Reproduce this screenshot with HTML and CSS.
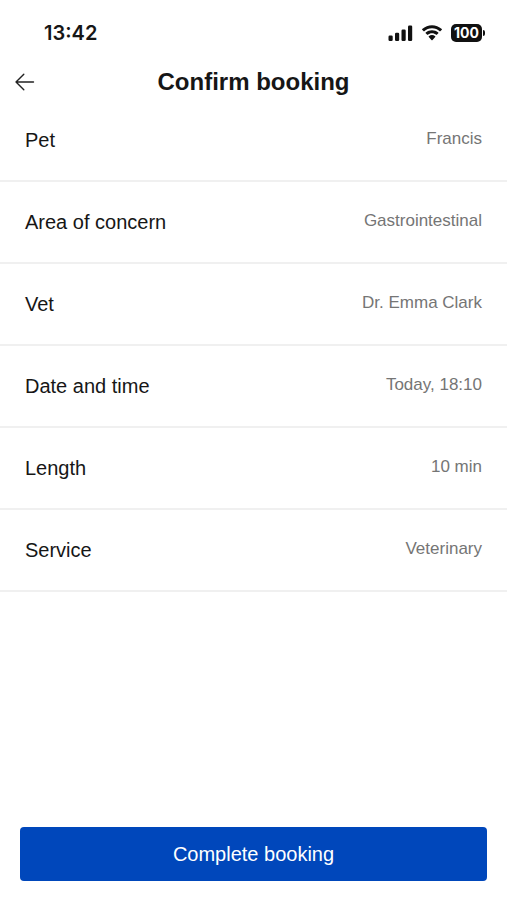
FILE: index.html
```html
<!DOCTYPE html>
<html lang="en">
<head>
<meta charset="utf-8">
<meta name="viewport" content="width=device-width, initial-scale=1">
<title>Confirm booking</title>
<link rel="stylesheet" href="styles.css">
</head>
<body>
<div class="status">
  <span class="clock">13:42</span>
  <div class="indicators">
    <svg width="25" height="16" viewBox="0 0 25 16" aria-hidden="true"><rect x="0.500" y="10.500" width="4.200" height="5.500" rx="1.200"/><rect x="7" y="7.800" width="4.200" height="8.200" rx="1.200"/><rect x="13.500" y="4.500" width="4.200" height="11.500" rx="1.200"/><rect x="20" y="0.500" width="4.200" height="15.500" rx="1.200"/></svg>
    <svg width="22" height="16" viewBox="0 0 22 16" aria-hidden="true"><path d="M11 3.200c3 0 5.700 1.200 7.700 3.100.2.200.4.200.6 0l1.500-1.500c.2-.2.200-.5 0-.7C15.300-1 6.700-1 1.200 4.100c-.2.200-.2.500 0 .7l1.500 1.500c.2.200.4.200.6 0C5.300 4.400 8 3.200 11 3.200zM11 8.200c1.600 0 3.100.6 4.200 1.600.2.200.4.200.6 0l1.500-1.500c.2-.2.200-.5 0-.7-3.500-3.200-9.100-3.200-12.600 0-.2.200-.2.500 0 .7l1.500 1.500c.2.200.4.200.6 0C7.900 8.800 9.400 8.200 11 8.200zM14.200 12c.2-.2.200-.5 0-.7-1.900-1.600-4.500-1.600-6.400 0-.2.200-.2.500 0 .7l2.900 3.200c.2.200.4.200.6 0z"/></svg>
    <div class="battery"><span class="level">100</span><span class="cap"></span></div>
  </div>
</div>
<header class="bar">
  <button class="back" type="button" aria-label="Back"><svg width="20" height="18" viewBox="0 0 20 18" aria-hidden="true"><path d="M18.500 9H1M8.800 1.200L1 9L8.800 16.800"/></svg></button>
  <h1>Confirm booking</h1>
</header>
<main>
  <dl class="details">
    <div class="row"><dt>Pet</dt><dd>Francis</dd></div>
    <div class="row"><dt>Area of concern</dt><dd>Gastrointestinal</dd></div>
    <div class="row"><dt>Vet</dt><dd>Dr. Emma Clark</dd></div>
    <div class="row"><dt>Date and time</dt><dd>Today, 18:10</dd></div>
    <div class="row"><dt>Length</dt><dd>10 min</dd></div>
    <div class="row"><dt>Service</dt><dd>Veterinary</dd></div>
  </dl>
</main>
<footer><button class="complete" type="button">Complete booking</button></footer>
</body>
</html>
```
FILE: styles.css
```css
* { box-sizing: border-box; }
body {
  margin: 0;
  min-height: 100vh;
  display: flex;
  flex-direction: column;
  background: #fff;
  color: #161616;
  font-family: "Liberation Sans", Arial, sans-serif;
}
.status {
  display: flex;
  justify-content: space-between;
  align-items: center;
  height: 56px;
  padding: 10px 22px 0 44px;
}
.clock { font: 600 20px/24px Inter, sans-serif; }
.indicators { display: flex; align-items: center; gap: 8px; }
.indicators svg { display: block; fill: #111; }
.battery { display: flex; align-items: center; gap: 1px; }
.level {
  width: 31px;
  border-radius: 5px;
  background: #111;
  color: #fff;
  font: 700 14px/18px Inter, sans-serif;
  text-align: center;
}
.cap { width: 2px; height: 6px; border-radius: 0 2px 2px 0; background: #111; }
.bar {
  display: grid;
  grid-template-columns: 40px 1fr 40px;
  align-items: center;
  height: 52px;
}
.back {
  display: flex;
  justify-content: flex-end;
  padding: 0 5px;
  border: 0;
  background: none;
}
.back svg { fill: none; stroke: #222; stroke-width: 1.4; stroke-linecap: round; stroke-linejoin: round; }
h1 { margin: 0; text-align: center; font-size: 24px; line-height: 32px; }
main { flex: 1; }
.details { margin: 0; }
.row {
  display: flex;
  justify-content: space-between;
  align-items: flex-start;
  height: 82px;
  padding: 28px 25px 0;
  border-bottom: 2px solid #f0f0f0;
}
.row:first-child { height: 74px; padding-top: 20px; }
dt { font-size: 20px; line-height: 24px; }
dd { margin: 0; color: #757575; font-size: 17px; line-height: 22px; }
footer { padding: 20px 20px 19px; }
.complete {
  width: 100%;
  height: 54px;
  border: 0;
  border-radius: 4px;
  background: #0047bb;
  color: #fff;
  font: 20px/24px "Liberation Sans", Arial, sans-serif;
}
```
